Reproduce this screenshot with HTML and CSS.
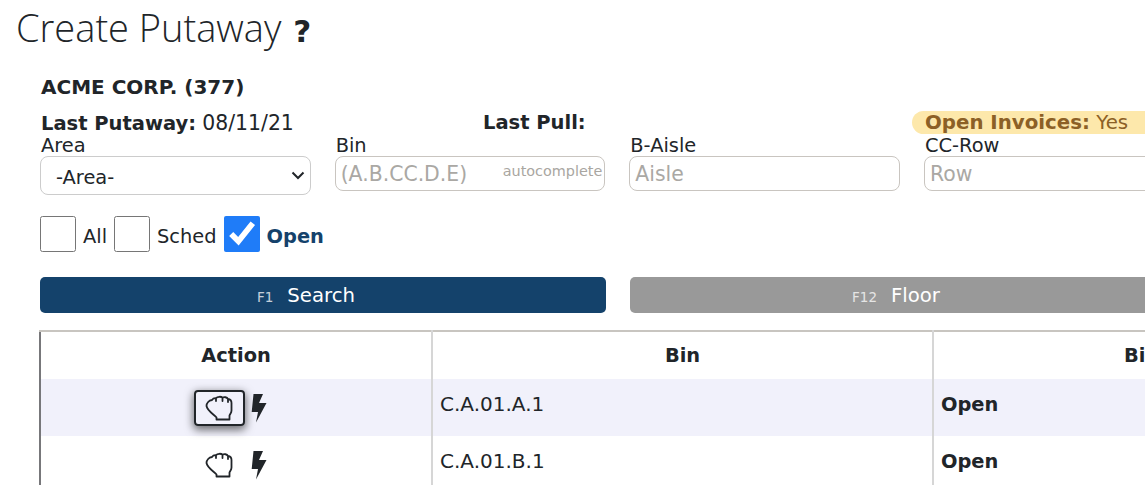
FILE: index.html
```html
<!DOCTYPE html>
<html lang="en">
<head>
<meta charset="utf-8">
<title>Create Putaway</title>
<link rel="stylesheet" href="styles.css">
</head>
<body>
<div class="page">
  <h1 class="title">Create Putaway <span class="help">?</span></h1>
  <div class="content">
    <div class="company">ACME CORP. (377)</div>
    <div class="info">
      <div><b>Last Putaway:</b> <span class="date">08/11/21</span></div>
      <div><b>Last Pull:</b></div>
      <div class="pill"><b>Open Invoices:</b> Yes</div>
    </div>
    <div class="fields">
      <label class="field"><span>Area</span>
        <span class="wrap">
          <select class="control select"><option>-Area-</option></select>
          <svg class="chev" viewBox="0 0 14 9"><path d="M1.5 1.5L7 7L12.5 1.5" fill="none" stroke="#212529" stroke-width="2"/></svg>
        </span>
      </label>
      <label class="field"><span>Bin</span>
        <span class="wrap">
          <input class="control" placeholder="(A.B.CC.D.E)">
          <small class="hint">autocomplete</small>
        </span>
      </label>
      <label class="field"><span>B-Aisle</span><input class="control" placeholder="Aisle"></label>
      <label class="field"><span>CC-Row</span><input class="control" placeholder="Row"></label>
    </div>
    <div class="checks">
      <input type="checkbox" class="check" id="c1"><label for="c1">All</label>
      <input type="checkbox" class="check" id="c2"><label for="c2">Sched</label>
      <input type="checkbox" class="check" id="c3" checked><label for="c3" class="on">Open</label>
    </div>
    <div class="buttons">
      <button class="btn primary"><small>F1</small>Search</button>
      <button class="btn muted"><small>F12</small>Floor</button>
    </div>
    <table class="grid">
      <thead>
        <tr><th class="c1">Action</th><th class="c2">Bin</th><th class="c3">Bin Status</th></tr>
      </thead>
      <tbody>
        <tr class="odd">
          <td class="act">
            <button class="hand focus"><svg class="ico-hand" viewBox="0 0 28 26"><use href="#hand"/></svg></button><svg class="ico-bolt" viewBox="0 0 18 30"><use href="#bolt"/></svg>
          </td>
          <td>C.A.01.A.1</td><td><b>Open</b></td>
        </tr>
        <tr>
          <td class="act">
            <button class="hand"><svg class="ico-hand" viewBox="0 0 28 26"><use href="#hand"/></svg></button><svg class="ico-bolt" viewBox="0 0 18 30"><use href="#bolt"/></svg>
          </td>
          <td>C.A.01.B.1</td><td><b>Open</b></td>
        </tr>
      </tbody>
    </table>
  </div>
</div>
<svg class="defs" width="0" height="0">
  <defs>
    <path id="hand" d="M1.5 11C1.5 8 4 5.5 7 5C8 3.5 9.5 3 11 3.2C12.5 1.5 16 1.3 17.5 2.6C19 1.8 22 2 23 4C25 4.2 26.5 6 26.5 8V15.5C26.5 18 25 19 24.5 20.5V24.5H11.5V22.5C9.5 20 2.5 16 1.5 11ZM11 3.2V6M17.5 2.6V6M23 4V7" fill="none" stroke="#212529" stroke-width="1.8" stroke-linejoin="round" stroke-linecap="round"/>
    <path id="bolt" d="M3.5 1H13L9 10H16.5L6 29.5L8 19H1.7Z" fill="#212529"/>
  </defs>
</svg>
</body>
</html>
```
FILE: styles.css
```css
* { box-sizing: border-box; }
html, body { margin: 0; padding: 0; overflow: hidden; background: #fff; }
body {
  width: 1145px;
  height: 485px;
  font-family: "DejaVu Sans", Verdana, sans-serif;
  font-size: 19.4px;
  color: #212529;
}
.page { width: 1500px; padding: 0 0 0 16px; }
.title {
  margin: 0;
  padding-top: 3px;
  height: 75px;
  font-family: "Open Sans", sans-serif;
  font-weight: 300;
  font-size: 38px;
  line-height: 48px;
}
.help { font-family: "DejaVu Sans", sans-serif; font-weight: 700; font-size: 31px; margin-left: 2px; }
.content { margin-left: 24px; width: 1420px; }
.company { font-weight: 700; font-size: 20px; line-height: 24px; height: 36px; padding-left: 1px; }
.info {
  display: grid;
  grid-template-columns: 442px 429px 300px;
  line-height: 24px;
  height: 24px;
  padding-left: 1px;
  font-size: 19.5px;
}
.date { font-size: 20.4px; }
.pill {
  background: #fde8ab;
  color: #8c6026;
  border-radius: 12px 0 0 12px;
  padding-left: 13px;
  height: 23px;
  line-height: 23px;
  font-size: 19.8px;
}
.fields {
  display: grid;
  grid-template-columns: repeat(4, 270.67px);
  column-gap: 24px;
}
.field { display: flex; flex-direction: column; line-height: 21px; }
.field > span:first-child { padding-left: 1px; }
.control {
  display: block;
  width: 100%;
  height: 35px;
  margin: 0;
  padding: 0 5px;
  border: 1px solid #c9c5c0;
  border-radius: 8px;
  background: #fff;
  font: inherit;
  font-size: 20.4px;
  color: #212529;
}
.control::placeholder { color: #aaa8a4; opacity: 1; }
.select {
  height: 39px;
  padding: 3px 15px 0;
  appearance: none;
  font-size: 19.4px;
  border-color: #ccc;
}
.wrap { position: relative; display: block; }
.chev {
  position: absolute;
  right: 6px;
  top: 15px;
  width: 14px;
  height: 9px;
  pointer-events: none;
}
.hint {
  position: absolute;
  right: 3px;
  top: 6px;
  font-size: 14.4px;
  line-height: 18px;
  color: #a9a6a1;
}
.checks {
  display: flex;
  align-items: center;
  height: 36px;
  margin-top: 21px;
}
.check {
  width: 36px;
  height: 36px;
  margin: 0 7px 0 0;
  accent-color: #1f7cf8;
  flex: none;
}
.checks label { margin-right: 7px; padding-top: 4px; }
.checks .on { color: #14426b; font-weight: 700; }
.buttons {
  display: grid;
  grid-template-columns: 566px 566px;
  column-gap: 24px;
  margin-top: 25px;
}
.btn {
  height: 36px;
  border: 0;
  border-radius: 5px;
  color: #fff;
  font: inherit;
  font-size: 19.7px;
  padding: 1px 34px 0 0;
}
.btn small { font-size: 13.5px; margin-right: 14px; opacity: 0.75; }
.primary { background: #14426b; }
.muted { background: #999; }
.grid {
  border-collapse: collapse;
  table-layout: fixed;
  width: 1390px;
  margin-top: 17px;
  border-top: 2px solid #c8c5c0;
  border-left: 2px solid #77777a;
  margin-left: -1px;
}
.grid th, .grid td { padding: 0 7px; border-right: 2px solid #d6d6d6; vertical-align: middle; }
.c1 { width: 392px; }
.c2 { width: 501px; }
.grid th { height: 48px; font-weight: 700; text-align: center; }
.grid td { height: 57px; padding-bottom: 8px; font-size: 20px; }
.grid td b { font-size: 19.4px; }
.odd td { background: #f1f1fb; }
.grid .act { text-align: center; padding: 0 11px 0 0; }
.hand {
  display: inline-flex;
  align-items: center;
  justify-content: center;
  width: 51px;
  height: 36px;
  padding: 0;
  border: 2px solid transparent;
  border-radius: 4px;
  background: transparent;
  vertical-align: middle;
}
.focus {
  border-color: #212529;
  box-shadow: 0 3px 8px 1px rgba(0, 0, 0, 0.55);
}
.ico-hand { width: 28px; height: 26px; display: block; }
.ico-bolt { width: 18px; height: 30px; margin-left: 5px; vertical-align: middle; }
.defs { position: absolute; }
```
